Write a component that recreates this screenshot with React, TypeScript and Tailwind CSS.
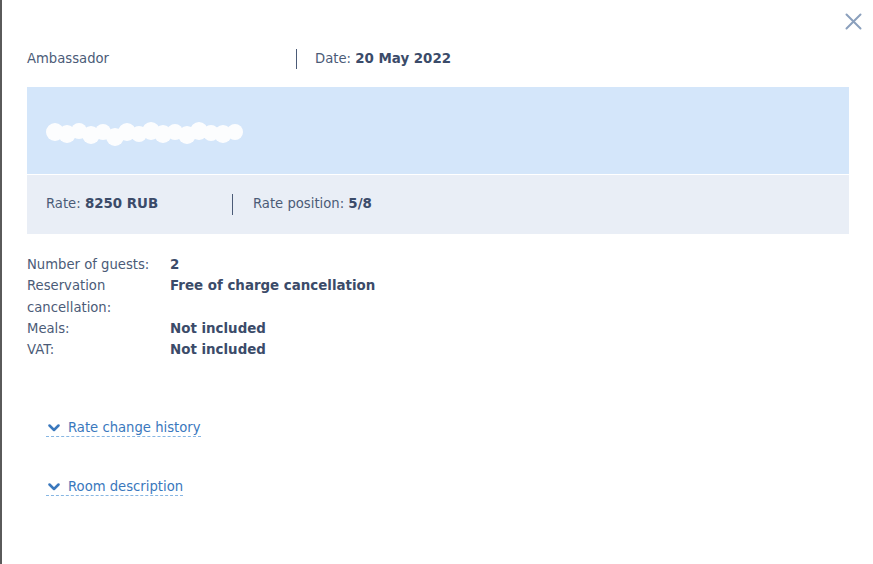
import React from "react";

const font = { fontFamily: '"DejaVu Sans", Verdana, sans-serif' };

function Chevron() {
  return (
    <svg width="12" height="8" viewBox="0 0 12 8" className="shrink-0">
      <path d="M1.5 1.5 L6 6 L10.5 1.5" fill="none" stroke="#3a78bd" strokeWidth="2.5" strokeLinecap="round" strokeLinejoin="round" />
    </svg>
  );
}

function Blurred() {
  const blobs: [number, number, number][] = [
    [10, 14, 9], [22, 16, 9], [34, 13, 8], [46, 17, 9], [58, 14, 8], [70, 19, 9],
    [82, 14, 9], [94, 16, 8], [106, 13, 9], [118, 16, 9], [130, 14, 8], [142, 17, 9],
    [154, 13, 9], [166, 15, 8], [178, 16, 9], [190, 14, 8],
  ];
  return (
    <svg width="200" height="32" viewBox="0 0 200 32">
      <g fill="#ffffff" opacity="0.95">
        {blobs.map(([x, y, r], i) => (
          <circle key={i} cx={x} cy={y} r={r} />
        ))}
      </g>
    </svg>
  );
}

const B = "font-bold text-[#3b4b69] text-[13.4px]";

export default function App() {
  return (
    <div className="flex w-[873px] h-[564px] overflow-hidden" style={font}>
      <div className="w-[2px] shrink-0 bg-[#5a5a5a]" />
      <div className="relative flex-1 bg-white pl-[25px] pr-[24px] pt-[49px] text-[13.2px] text-[#4b5b77]">
        <button className="absolute right-[11px] top-[12px] w-[18px] h-[18px] flex items-center justify-center">
          <svg width="17" height="17" viewBox="0 0 17 17">
            <path d="M1.5 1.5 L15.5 15.5 M15.5 1.5 L1.5 15.5" stroke="#8ba0bd" strokeWidth="2" strokeLinecap="round" />
          </svg>
        </button>

        <div className="flex items-center h-[20px]">
          <div className="w-[269px] shrink-0">Ambassador</div>
          <div className="w-px h-[20px] bg-[#4b5b77]" />
          <div className="pl-[18px]">
            Date: <span className={B}>20 May 2022</span>
          </div>
        </div>

        <div className="mt-[18px] h-[87px] bg-[#d4e6fa] flex items-center pl-[18px] pt-[6px]">
          <Blurred />
        </div>
        <div className="h-px bg-white" />
        <div className="h-[59px] bg-[#e9eef6] flex items-center pl-[19px]">
          <div className="w-[186px] shrink-0">
            Rate: <span className={B}>8250 RUB</span>
          </div>
          <div className="w-px h-[21px] bg-[#4b5b77]" />
          <div className="pl-[20px]">
            Rate position: <span className={B}>5/8</span>
          </div>
        </div>

        <div className="mt-[20px] grid grid-cols-[143px_1fr] leading-[21.3px]">
          <div>Number of guests:</div>
          <div className={B}>2</div>
          <div className="w-[110px]">Reservation cancellation:</div>
          <div className={B}>Free of charge cancellation</div>
          <div>Meals:</div>
          <div className={B}>Not included</div>
          <div>VAT:</div>
          <div className={B}>Not included</div>
        </div>

        <div className="mt-[60px] pl-[19px] flex flex-col items-start gap-[42px]">
          <div className="flex items-center gap-[8px] pl-[2px] border-b border-dashed border-[#86b6e3] text-[#3a78bd] leading-[16px]">
            <Chevron />
            <span>Rate change history</span>
          </div>
          <div className="flex items-center gap-[8px] pl-[2px] border-b border-dashed border-[#86b6e3] text-[#3a78bd] leading-[16px]">
            <Chevron />
            <span>Room description</span>
          </div>
        </div>
      </div>
    </div>
  );
}
